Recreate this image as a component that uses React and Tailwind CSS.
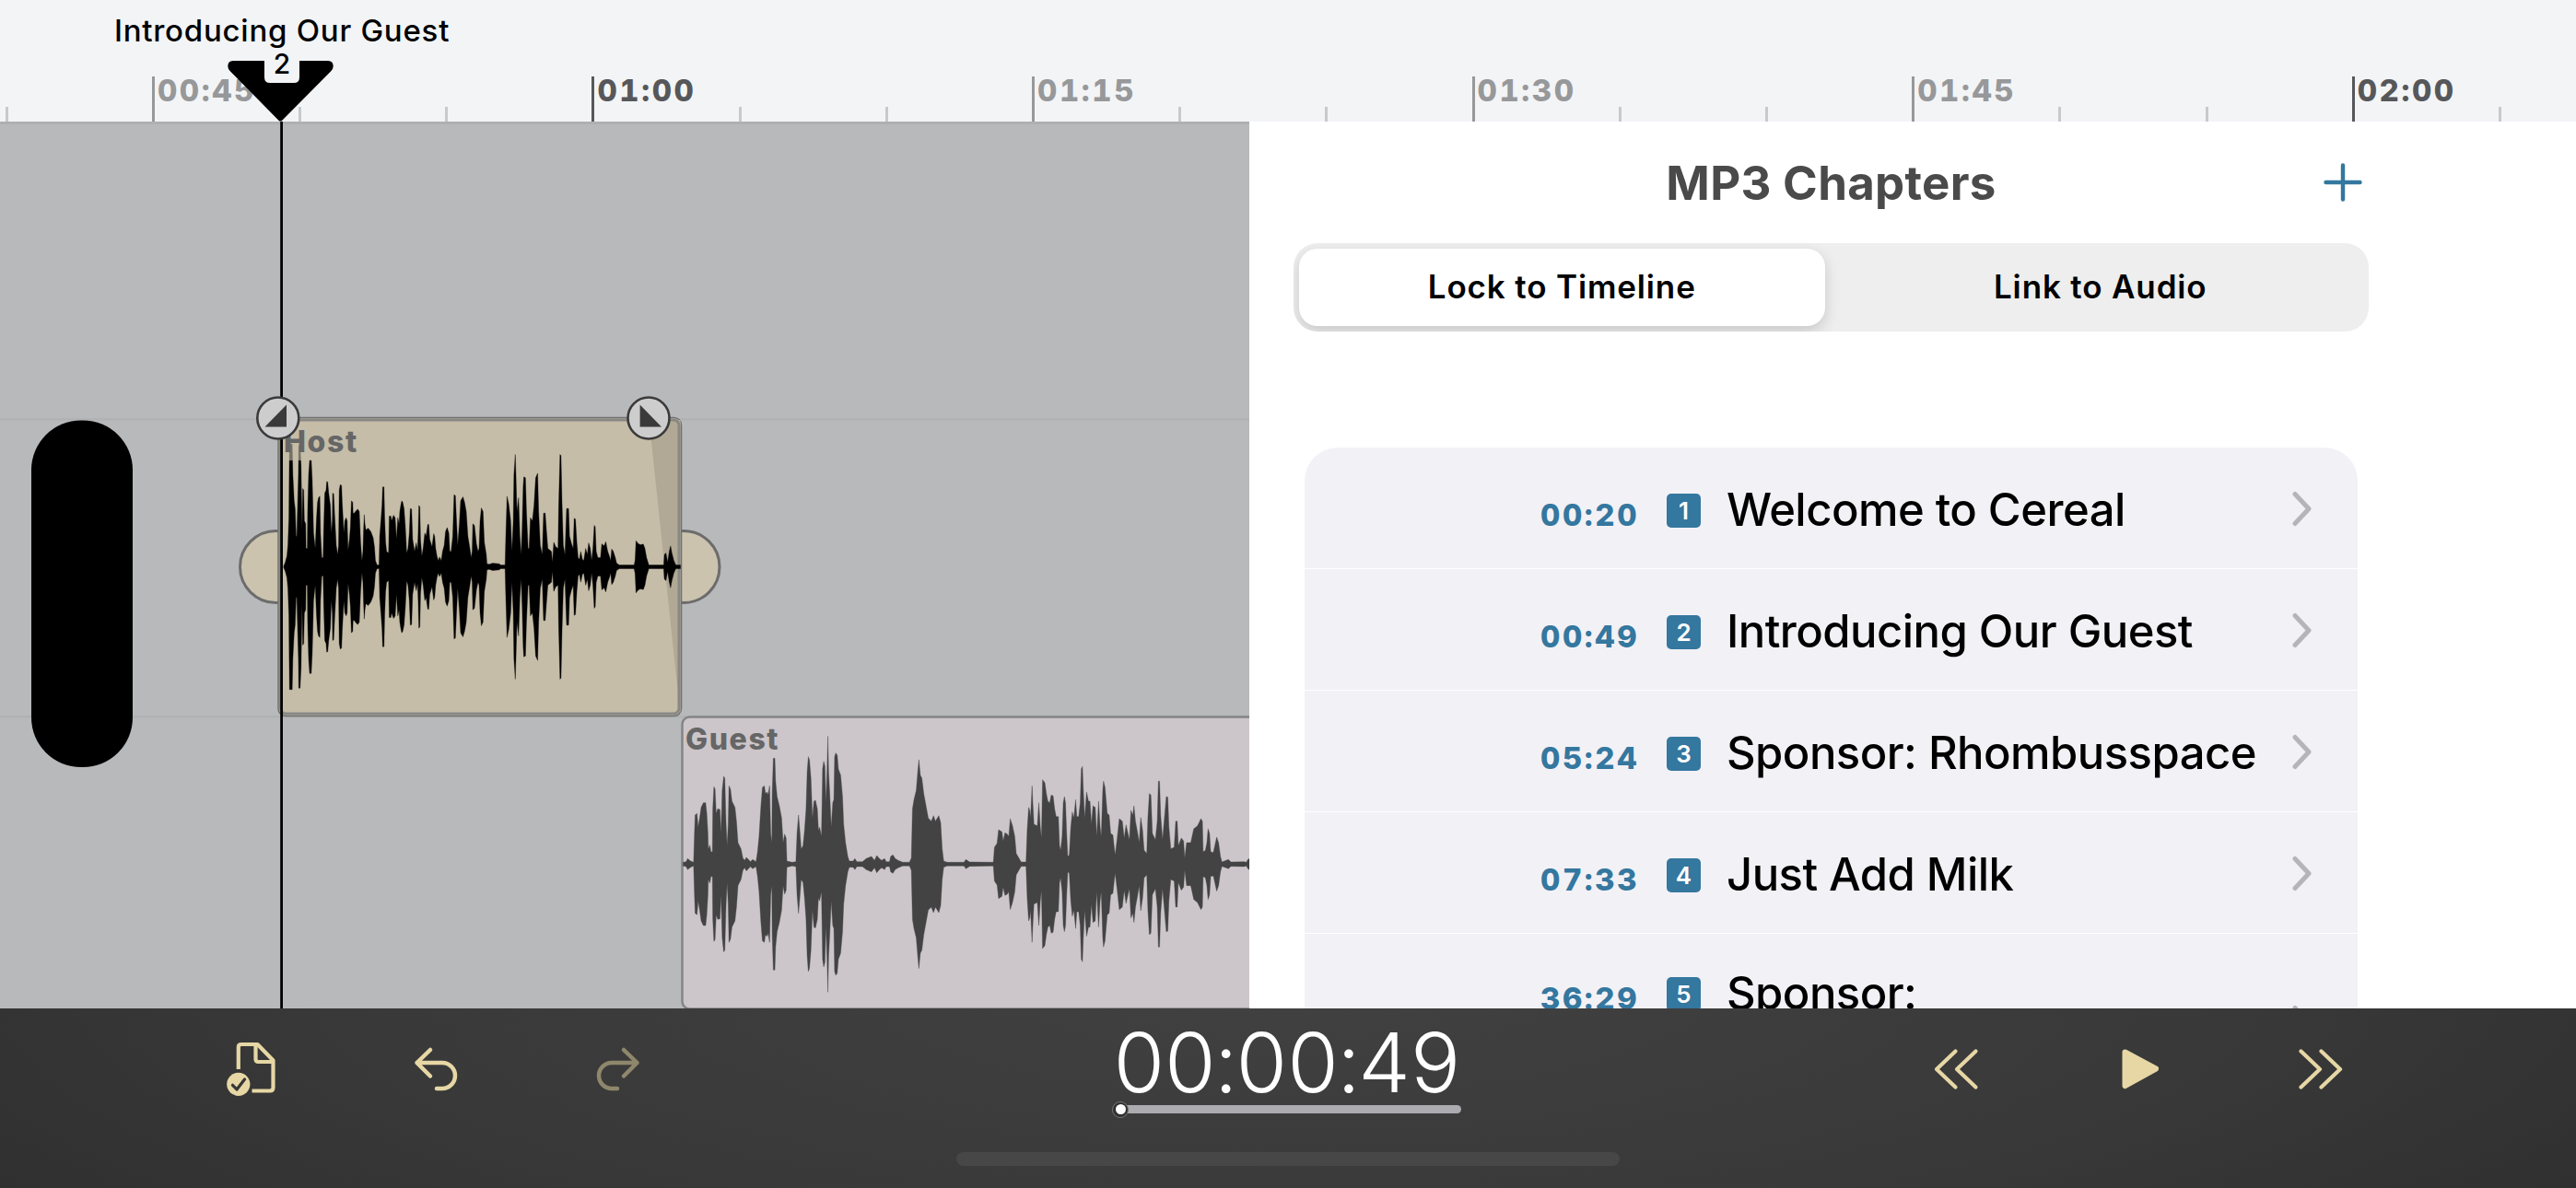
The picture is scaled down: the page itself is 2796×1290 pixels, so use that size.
import React from 'react';

const HOST_WAVE = '190:2 195:15 200:35 203:70 206:160 207:300 208:400 216:400 218:300 222:215 225:190 228:100 230:100 232:180 235:300 236:395 240:395 243:330 246:120 248:255 251:250 253:150 257:140 258:60 262:60 263:180 266:300 269:347 274:347 277:280 281:110 286:60 290:160 293:210 296:225 300:230 302:110 306:30 310:30 312:130 315:240 319:250 321:278 324:276 327:240 332:200 335:110 338:150 339:240 342:238 345:170 350:70 354:40 357:70 359:250 362:268 366:265 368:210 373:110 376:150 380:160 383:150 386:55 390:90 393:130 396:215 400:210 401:175 405:175 408:180 415:188 420:180 424:80 428:20 431:50 433:120 435:170 437:140 440:120 447:126 455:115 462:95 466:65 469:20 474:6 480:6 482:100 486:155 489:200 491:260 495:260 497:160 500:80 503:50 509:45 511:165 516:165 518:150 524:168 529:160 533:90 537:160 541:140 543:180 546:200 549:215 552:210 556:190 560:130 564:45 568:60 572:110 575:190 579:188 582:90 588:50 593:78 597:55 599:110 601:200 604:195 606:90 610:35 614:60 619:110 623:100 628:138 631:138 634:90 641:65 646:108 649:100 652:60 656:35 660:20 664:32 669:20 673:50 678:70 682:115 687:128 692:110 695:50 699:50 704:100 708:235 712:232 715:160 719:70 724:140 728:215 735:228 740:210 745:180 750:100 756:60 760:30 763:50 765:140 770:135 776:75 781:50 784:60 787:150 791:192 796:180 800:80 806:40 808:10 815:8 825:12 845:10 850:6 863:6 865:90 869:230 874:205 880:150 884:50 888:150 890:300 894:366 896:300 899:180 904:225 908:100 912:40 915:130 918:260 920:293 925:290 928:180 933:60 936:60 940:160 946:150 951:200 956:290 962:305 965:180 970:70 976:40 980:175 985:175 988:130 993:60 1004:50 1007:15 1011:80 1017:65 1024:60 1026:200 1030:366 1033:362 1036:210 1040:70 1045:40 1050:190 1056:190 1059:100 1065:75 1070:60 1073:158 1077:155 1081:80 1085:30 1089:25 1093:50 1098:25 1102:20 1108:60 1113:40 1117:78 1122:60 1126:20 1130:60 1134:135 1137:130 1140:50 1145:30 1153:30 1157:75 1164:68 1169:82 1175:50 1180:35 1184:20 1187:58 1192:50 1198:30 1202:12 1210:6 1255:6 1258:20 1261:85 1268:75 1275:72 1283:74 1288:60 1293:30 1300:6 1345:6 1347:40 1352:45 1357:15 1362:50 1366:68 1370:45 1376:20 1382:6 1396:6';

const GUEST_WAVE = '28:6 36:8 40:18 48:10 56:6 58:90 60:160 65:165 68:120 72:150 76:185 82:200 88:200 91:165 94:100 95:50 99:62 102:40 106:40 107:180 110:252 113:245 116:165 120:180 126:178 129:100 132:240 136:286 139:280 142:140 145:60 148:130 150:255 154:245 158:205 166:185 170:140 174:70 182:50 187:20 192:12 196:22 202:15 207:8 213:15 222:8 226:40 230:90 235:190 239:250 244:255 247:230 251:235 254:225 258:255 261:100 264:70 265:230 268:345 272:345 274:270 278:220 284:190 290:150 294:70 298:98 302:85 304:10 318:6 328:8 331:100 335:160 339:100 342:50 347:60 351:110 355:180 358:300 361:350 364:340 368:280 372:150 376:205 380:208 385:180 388:110 391:120 396:90 399:310 402:335 405:320 408:200 411:310 413:417 415:300 418:230 422:120 426:200 429:210 431:350 434:362 438:355 441:310 447:290 452:220 455:130 460:70 466:25 470:10 480:10 485:18 490:8 505:8 515:18 529:25 537:12 543:28 550:18 556:12 564:18 568:8 577:8 580:25 586:30 592:18 600:12 612:6 630:6 635:20 638:180 642:210 648:240 652:300 655:340 659:290 663:280 668:230 674:190 680:150 688:140 694:158 699:140 708:158 713:135 717:50 721:10 730:6 775:6 780:15 790:7 853:6 856:55 863:68 867:112 876:105 879:75 884:102 890:98 894:90 898:148 904:125 910:90 914:35 921:20 927:7 940:7 943:110 947:185 950:175 952:150 956:255 958:200 961:130 970:125 974:200 978:120 981:85 984:275 990:265 994:230 998:205 1003:200 1007:225 1012:222 1016:180 1020:155 1026:155 1029:60 1032:45 1036:90 1039:200 1042:220 1045:200 1048:100 1051:25 1055:30 1059:120 1063:170 1067:150 1072:210 1075:155 1080:155 1084:200 1087:310 1090:318 1092:250 1096:150 1101:235 1106:205 1110:205 1114:130 1118:190 1124:185 1128:90 1133:205 1137:120 1140:90 1144:240 1146:270 1150:250 1156:165 1161:160 1165:100 1171:95 1174:60 1177:30 1182:80 1188:148 1196:140 1201:85 1206:128 1211:100 1215:80 1219:175 1224:160 1227:190 1231:140 1237:100 1241:70 1245:152 1250:110 1254:45 1261:35 1264:150 1268:230 1272:225 1276:100 1284:80 1289:140 1292:270 1295:270 1298:160 1303:80 1308:150 1313:220 1317:218 1320:120 1325:50 1334:55 1338:140 1342:140 1345:60 1353:85 1359:75 1362:20 1367:70 1378:70 1386:115 1396:125 1405:148 1409:140 1411:40 1417:45 1421:70 1424:115 1428:100 1431:40 1438:38 1442:60 1447:88 1452:70 1457:25 1461:7 1478:15 1485:7 1520:8 1526:6 1530:15 1534:18';

// turns "x:amplitude" samples into a polygon mirrored around y = 0
const toPoints = (wave) => {
  const samples = wave.split(' ').map((s) => s.split(':').map(Number));
  const top = samples.map(([x, a]) => `${x},${-a}`);
  const bottom = samples.map(([x, a]) => `${x},${a}`).reverse();
  return top.concat(bottom).join(' ');
};

const ticks = [
  null, { label: '00:45' }, null, null,
  { label: '01:00', strong: true }, null, null,
  { label: '01:15' }, null, null,
  { label: '01:30' }, null, null,
  { label: '01:45' }, null, null,
  { label: '02:00', strong: true }, null,
];

const chapters = [
  { time: '00:20', title: 'Welcome to Cereal' },
  { time: '00:49', title: 'Introducing Our Guest' },
  { time: '05:24', title: 'Sponsor: Rhombusspace' },
  { time: '07:33', title: 'Just Add Milk' },
  { time: '36:29', title: 'Sponsor:', tall: true },
];

const Tick = ({ tick }) => {
  if (!tick) return <div className="w-[159.2px] h-4 shrink-0 border-l-[3px] border-[#c8c9cb]" />;
  return <div className={`w-[159.2px] h-[49px] shrink-0 border-l-[3px] pl-[3px] text-[33px] leading-[31px] font-extrabold tabular-nums tracking-[2.6px] ${tick.strong ? 'border-[#56575a] text-[#56575a]' : 'border-[#97989a] text-[#97989a]'}`}>
      {tick.label}
    </div>;
};

const Ruler = () => <header className="relative z-20 h-[132px] shrink-0 bg-[#f3f4f6]">
    <div className="flex h-full items-end overflow-hidden pl-[5.7px]">
      {ticks.map((tick, i) => <Tick key={i} tick={tick} />)}
    </div>
    <div className="absolute left-[6px] top-[13px] w-[600px] text-center text-[33px] leading-[40px] font-medium tracking-[0.75px] text-black">
      Introducing Our Guest
    </div>
    <svg className="absolute left-[246px] top-[52px]" width="118" height="81" viewBox="246 52 118 81">
      <path d="M253 66H356Q361.700 66 361.700 72Q361.700 75 359 77.500L305.500 131.500H303.200L250 77.500Q247.300 75 247.300 72Q247.300 66 253 66Z" fill="#000" />
      <path d="M287 52H325V84Q325 90 319 90H293Q287 90 287 84Z" fill="#f3f4f6" />
    </svg>
    <div className="absolute left-[287px] top-[52px] w-[38px] text-center text-[30px] leading-[35px] font-medium text-black">2</div>
  </header>;

const Timeline = () => <section className="relative w-[1356px] shrink-0 overflow-hidden bg-[#b7b9bb]">
    <svg className="absolute left-0 top-0" width="1356" height="963" viewBox="0 132 1356 963">
      <rect x="0" y="132" width="1356" height="3" fill="#aeb0b2" />
      <rect x="0" y="454" width="1356" height="2.500" fill="#b0b2b4" />
      <rect x="0" y="777" width="1356" height="2.500" fill="#b0b2b4" />
      <rect x="34" y="456.500" width="110" height="376.500" rx="54" fill="#000" />

      {/* trim handles */}
      <circle cx="299.500" cy="615.500" r="39" fill="#cbc3ae" stroke="#6c6c6c" strokeWidth="3" />
      <circle cx="742" cy="615.500" r="39" fill="#cbc3ae" stroke="#6c6c6c" strokeWidth="3" />

      {/* host clip */}
      <rect x="302" y="453.500" width="437.500" height="324" rx="8" fill="#c5bda8" stroke="#707070" strokeWidth="1.500" />
      <path d="M704.500 456L738.500 777V456Z" fill="#b1a995" />
      <rect x="304.500" y="456" width="432.500" height="319" rx="6" fill="none" stroke="#888886" strokeWidth="3" />
      <g transform="translate(240 615.500) scale(0.35714 0.33333)">
        <polygon points={toPoints(HOST_WAVE)} fill="#000" stroke="#000" strokeWidth="1" />
      </g>
      <rect x="308" y="470" width="80" height="30" fill="#c5bda8" fillOpacity="0.600" />

      {/* guest clip */}
      <rect x="740.500" y="778.500" width="700" height="317" rx="8" fill="#ccc6ca" stroke="#858585" strokeWidth="2.500" />
      <g transform="translate(730 938.300) scale(0.40816 0.33333)">
        <polygon points={toPoints(GUEST_WAVE)} fill="#434343" stroke="#434343" strokeWidth="1" />
      </g>
      <rect x="745" y="790" width="100" height="33" fill="#ccc6ca" fillOpacity="0.600" />
    </svg>
    <div className="absolute left-[308px] top-[328px] text-[32px] leading-[40px] font-extrabold tracking-[1.6px] text-[#666]">Host</div>
    <div className="absolute left-[744px] top-[651px] text-[32px] leading-[40px] font-extrabold tracking-[1.6px] text-[#666]">Guest</div>
    <svg className="absolute left-0 top-0" width="1356" height="963" viewBox="0 132 1356 963">
      <rect x="304.200" y="132" width="2.800" height="963" fill="#000" />
      <circle cx="301.800" cy="454" r="22.500" fill="#cdcdcd" stroke="#3a3a3a" strokeWidth="2.600" />
      <path d="M287.500 463.500H311V439.500Z" fill="#3a3a3a" />
      <circle cx="704" cy="454" r="22.500" fill="#cdcdcd" stroke="#3a3a3a" strokeWidth="2.600" />
      <path d="M694.600 439.500V463.500H718Z" fill="#3a3a3a" />
    </svg>
  </section>;

const ChapterRow = ({ chapter, number }) => <li className={`flex items-center border-b-[1.5px] border-white pl-[256px] pr-[48px] ${chapter.tall ? 'h-[192px]' : 'h-[132px]'}`}>
    <div className={`flex grow items-baseline pt-[2px] ${chapter.tall ? 'h-[124px]' : 'h-[58px]'}`}>
      <span className="w-[137px] shrink-0 text-[33px] leading-[58px] font-extrabold tabular-nums tracking-[2.6px] text-[#34779f]">{chapter.time}</span>
      <span className="mt-[11px] flex h-[37px] w-[37px] shrink-0 items-center justify-center self-start rounded-[5px] bg-[#34779f] text-[26px] font-semibold text-white">{number}</span>
      <span className="ml-[28px] whitespace-nowrap text-[49px] leading-[58px] font-medium tracking-[-0.55px] text-black">{chapter.title}</span>
    </div>
    <svg className="shrink-0" width="24" height="40" viewBox="0 0 24 40" fill="none" stroke="#b5b5b8" strokeWidth="5" strokeLinecap="round" strokeLinejoin="round">
      <path d="M4 4.500L19 20.500L4 36.500" />
    </svg>
  </li>;

const Chapters = () => <section className="flex grow flex-col overflow-hidden bg-white">
    <div className="grid h-[132px] w-[1167px] ml-[48px] shrink-0 grid-cols-[1fr_auto_1fr] items-center">
      <h1 className="col-start-2 text-[51px] leading-none font-bold tracking-[0.3px] text-[#4a4a4a]">MP3 Chapters</h1>
      <svg className="mr-[6px] justify-self-end" width="44" height="44" viewBox="0 0 44 44" stroke="#34779f" strokeWidth="4.400" strokeLinecap="round">
        <path d="M22 3.500V40.500M3.500 22H40.500" />
      </svg>
    </div>
    <div className="ml-[48px] grid h-24 w-[1167px] shrink-0 grid-cols-2 overflow-hidden rounded-[26px] bg-[#eee] p-[6px] text-[35px] font-semibold tracking-[0.85px] text-black">
      <div className="mr-[7px] flex items-center justify-center rounded-[20px] bg-white pb-[1px] shadow-[0_6px_16px_rgba(0,0,0,0.16)]">Lock to Timeline</div>
      <div className="flex items-center justify-center pb-[1px] pl-[7px]">Link to Audio</div>
    </div>
    <ul className="ml-[60px] mt-[126px] w-[1143px] shrink-0 overflow-hidden rounded-[36px] bg-[#f2f1f6]">
      {chapters.map((chapter, i) => <ChapterRow key={chapter.time} chapter={chapter} number={i + 1} />)}
    </ul>
  </section>;

const Icon = ({ children, className = '' }) => <svg className={`shrink-0 ${className}`} width="60" height="60" viewBox="0 0 60 60" fill="none" stroke="currentColor" strokeWidth="4.200" strokeLinecap="round" strokeLinejoin="round">
    {children}
  </svg>;

const Toolbar = () => <footer className="h-[195px] shrink-0 bg-[radial-gradient(ellipse_1700px_420px_at_50%_-10%,#414141,#393939_60%,#2f2f2f)]">
    <div className="flex h-[132px] items-center text-[#e6d7a5]">
      <Icon className="ml-[243px]">
        <path d="M15.800 30V6Q15.800 3 19 3H36.500L53.500 20.500V50Q53.500 53.500 50 53.500H30.500" strokeLinecap="butt" />
        <path d="M34.500 3V19Q34.500 22 37.500 22H53" />
        <circle cx="15.800" cy="46.300" r="12.600" fill="currentColor" stroke="none" />
        <path d="M9.500 47.300L14 52L22.500 41" stroke="#363636" strokeWidth="3.200" />
      </Icon>
      <Icon className="ml-[140px]">
        <path d="M24 9L9.500 23L24 37.500M9.500 23H37A14 14 0 0 1 37 51H31" strokeWidth="4.500" />
      </Icon>
      <Icon className="ml-[138px] text-[#8f876c]">
        <path d="M36 9L50.500 23L36 37.500M50.500 23H23A14 14 0 0 0 23 51H29" strokeWidth="4.500" />
      </Icon>
      <div className="ml-[506px] flex w-[382px] flex-col items-center pt-[9px]">
        <div className="pr-[4px] whitespace-nowrap text-[90px] leading-[74px] font-light tabular-nums tracking-[-2.5px] text-white">00:00:49</div>
        <div className="mt-[4px] flex h-[20px] w-full items-center">
          <div className="relative ml-[8px] h-[9px] w-[371px] rounded-full bg-[#ababb0]">
            <div className="absolute -left-[8px] -top-[4.5px] h-[18px] w-[18px] rounded-full border border-[#777] bg-[#303030] p-[2.5px]">
              <div className="h-full w-full rounded-full bg-white" />
            </div>
          </div>
        </div>
      </div>
      <Icon className="ml-[504px]">
        <path d="M29.500 10.500L9 30L29.500 49.500M51.500 10.500L31 30L51.500 49.500" />
      </Icon>
      <Icon className="ml-[140px]">
        <path d="M13.500 11.500L47 29.500L13.500 48Z" fill="currentColor" strokeWidth="6" />
      </Icon>
      <Icon className="ml-[136px]">
        <path d="M8.500 10.500L29 30L8.500 49.500M30.500 10.500L51 30L30.500 49.500" />
      </Icon>
    </div>
    <div className="mx-auto mt-[24px] h-[15px] w-[720px] rounded-full bg-[#474747]" />
  </footer>;

const App = () => {
  return <div className="flex h-[1290px] w-[2796px] flex-col overflow-hidden font-['Inter','Liberation_Sans',sans-serif]">
      <Ruler />
      <main className="flex h-[963px] shrink-0">
        <Timeline />
        <Chapters />
      </main>
      <Toolbar />
    </div>;
};
export default App;
